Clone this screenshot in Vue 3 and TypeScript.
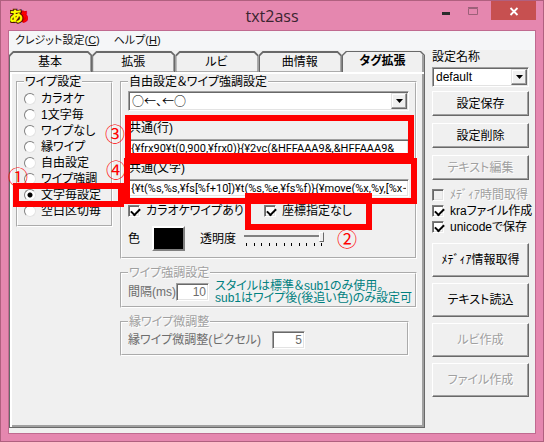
<script setup lang="ts">
import { ref } from 'vue'

interface CheckItem { id: string; label: string; checked: boolean; disabled: boolean }

const tabs: string[] = ['基本', '拡張', 'ルビ', '曲情報', 'タグ拡張']
const activeTab = ref<string>('タグ拡張')

const wipeModes: string[] = ['カラオケ', '1文字毎', 'ワイプなし', '縁ワイプ', '自由設定', 'ワイプ強調', '文字毎設定', '空白区切毎']
const wipeMode = ref<string>('文字毎設定')

const preset = ref<string>('○←、←○')
const lineTag = ref<string>('{¥frx90¥t(0,900,¥frx0)}{¥2vc(&HFFAAA9&,&HFFAAA9&')
const charTag = ref<string>('{¥t(%s,%s,¥fs[%f+10])¥t(%s,%e,¥fs%f)}{¥move(%x,%y,[%x−5(')
const karaoke = ref<boolean>(true)
const noPosition = ref<boolean>(true)
const opacity = ref<number>(100)
const interval = ref<string>('10')
const edge = ref<string>('5')
const config = ref<string>('default')

const options = ref<CheckItem[]>([
  { id: 'media', label: 'ﾒﾃﾞｨｱ時間取得', checked: false, disabled: true },
  { id: 'kra', label: 'kraファイル作成', checked: true, disabled: false },
  { id: 'uni', label: 'unicodeで保存', checked: true, disabled: false },
])
const ticks: number[] = Array.from({ length: 11 }, (_, i) => i)
</script>

<template>
  <div class="window">
    <header class="titlebar">
      <svg class="app-icon" viewBox="0 0 18 18" aria-hidden="true">
        <text class="icon-small" x="7" y="15">あ</text>
        <text class="icon-large" x="-1" y="15">あ</text>
      </svg>
      <h1>txt2ass</h1>
      <div class="win-buttons">
        <button type="button" class="win-btn" aria-label="最小化">
          <svg viewBox="0 0 10 10"><rect x="1" y="6" width="8" height="3" fill="#2b2b2b" /></svg>
        </button>
        <button type="button" class="win-btn" aria-label="最大化" disabled>
          <svg viewBox="0 0 10 10"><path d="M.5 2.5h9v6h-9zM0 1.5h10" fill="none" stroke="#9c6079" /></svg>
        </button>
        <button type="button" class="win-btn close" aria-label="閉じる">
          <svg viewBox="0 0 10 10"><path d="M1.500 2l7 7M8.500 2l-7 7" fill="none" stroke="#fff" stroke-width="1.8" /></svg>
        </button>
      </div>
    </header>

    <div class="client">
      <nav class="menu">
        <a href="#credit">クレジット設定(<u>C</u>)</a>
        <a href="#help">ヘルプ(<u>H</u>)</a>
      </nav>

      <div class="body">
        <main class="pages">
          <div class="tabs" role="tablist">
            <button
              v-for="tab in tabs"
              :key="tab"
              type="button"
              role="tab"
              class="tab"
              :class="{ active: tab === activeTab }"
              :aria-selected="tab === activeTab"
              @click="activeTab = tab"
            ><span>{{ tab }}</span></button>
          </div>

          <div class="panel" role="tabpanel">
            <fieldset class="group modes">
              <legend>ワイプ設定</legend>
              <label v-for="mode in wipeModes" :key="mode" class="radio">
                <input v-model="wipeMode" type="radio" name="wipe" :value="mode" />{{ mode }}
              </label>
            </fieldset>

            <div class="settings">
              <fieldset class="group custom">
                <legend>自由設定＆ワイプ強調設定</legend>
                <span class="combo">
                  <select v-model="preset" class="symbols" aria-label="自由設定">
                    <option>○←、←○</option>
                  </select>
                  <i><svg viewBox="0 0 7 4"><path d="M0 0h7L3.500 4z" /></svg></i>
                </span>
                <label class="caption first" for="line">共通(行)</label>
                <input id="line" v-model="lineTag" class="field code" type="text" />
                <label class="caption" for="char">共通(文字)</label>
                <input id="char" v-model="charTag" class="field code" type="text" />
                <div class="checks">
                  <label class="check"><input v-model="karaoke" type="checkbox" />カラオケワイプあり</label>
                  <label class="check"><input v-model="noPosition" type="checkbox" />座標指定なし</label>
                </div>
                <div class="color-row">
                  <span>色</span>
                  <button type="button" class="swatch" aria-label="色"></button>
                  <label for="opacity">透明度</label>
                  <div class="slider">
                    <input id="opacity" v-model="opacity" type="range" min="0" max="100" />
                    <div class="ticks"><b v-for="t in ticks" :key="t"></b></div>
                  </div>
                </div>
              </fieldset>

              <fieldset class="group emphasis" disabled>
                <legend>ワイプ強調設定</legend>
                <div class="row">
                  <label for="interval">間隔(ms)</label>
                  <input id="interval" v-model="interval" class="field num" type="text" />
                  <p>スタイルは標準＆sub1のみ使用。<br />sub1はワイプ後(後追い色)のみ設定可</p>
                </div>
              </fieldset>

              <fieldset class="group edge" disabled>
                <legend>縁ワイプ微調整</legend>
                <div class="row">
                  <label for="edge">縁ワイプ微調整(ピクセル)</label>
                  <input id="edge" v-model="edge" class="field num" type="text" />
                </div>
              </fieldset>
            </div>
          </div>
        </main>

        <aside class="side">
          <label for="config">設定名称</label>
          <span class="combo">
            <select id="config" v-model="config">
              <option>default</option>
            </select>
            <i><svg viewBox="0 0 7 4"><path d="M0 0h7L3.500 4z" /></svg></i>
          </span>
          <div class="stack">
            <button type="button" class="btn">設定保存</button>
            <button type="button" class="btn">設定削除</button>
            <button type="button" class="btn" disabled>テキスト編集</button>
          </div>
          <div class="options">
            <label v-for="item in options" :key="item.id" class="check" :class="{ off: item.disabled }">
              <input v-model="item.checked" type="checkbox" :disabled="item.disabled" />{{ item.label }}
            </label>
          </div>
          <div class="stack tall">
            <button type="button" class="btn">ﾒﾃﾞｨｱ情報取得</button>
            <button type="button" class="btn">テキスト読込</button>
            <button type="button" class="btn" disabled>ルビ作成</button>
            <button type="button" class="btn" disabled>ファイル作成</button>
          </div>
        </aside>
      </div>
    </div>

    <div class="mark box-three"></div>
    <div class="mark box-four"></div>
    <div class="mark box-one"></div>
    <div class="mark box-two"></div>
    <span class="num-mark one">①</span>
    <span class="num-mark two">②</span>
    <span class="num-mark three">③</span>
    <span class="num-mark four">④</span>
  </div>
</template>

<style>
body { margin: 0; }
</style>

<style scoped>
* { box-sizing: border-box; }
.window {
  position: relative;
  display: flex;
  flex-direction: column;
  min-height: 100vh;
  padding: 0 7px 7px;
  border: 1px solid #b0607f;
  background: #e587af;
  color: #000;
  font: 12px/14px "Liberation Sans", "Noto Sans CJK JP", sans-serif;
  font-feature-settings: "palt";
}
button, input, select { margin: 0; font: inherit; font-feature-settings: inherit; color: inherit; }

.titlebar { display: grid; grid-template-columns: 1fr auto 1fr; height: 29px; }
.app-icon { width: 18px; height: 18px; margin: 5px 0 0 2px; }
.app-icon text { font-family: "Noto Sans CJK JP", sans-serif; font-weight: 900; paint-order: stroke; stroke-width: 2px; }
.icon-large { font-size: 14px; fill: #ff0; stroke: #4a1408; }
.icon-small { font-size: 11px; fill: #f00; stroke: #e00000; }
h1 { margin: 0; font: 16px/30px "Open Sans", sans-serif; color: #3a2430; }
.win-buttons { display: flex; justify-content: flex-end; }
.win-btn { display: grid; place-items: center; width: 27px; height: 19px; padding: 0; border: 0; background: none; }
.win-btn svg { width: 10px; height: 10px; }
.win-btn.close { width: 45px; margin-left: 5px; background: #c75050; }

.client { flex: 1; display: flex; flex-direction: column; border: 1px solid #c06a90; background: #f0f0f0; }
.menu { display: flex; gap: 14px; height: 19px; padding-left: 6px; background: #f5f6f8; font-size: 11px; }
.menu a { color: #111; text-decoration: none; line-height: 19px; }
.body { flex: 1; display: grid; grid-template-columns: 1fr 97px; gap: 7px; padding: 0 6px 5px 0; }

.pages { display: flex; flex-direction: column; padding-top: 1px; min-width: 0; }
.tabs { display: grid; grid-template-columns: repeat(5, 1fr); height: 21px; }
.tab {
  padding: 1px 1px 0;
  border: 0;
  background: #696969;
  clip-path: polygon(0 4px, 4px 0, calc(100% - 4px) 0, 100% 4px, 100% 100%, 0 100%);
}
.tab span {
  display: block;
  height: 19px;
  line-height: 19px;
  background: #f0f0f0;
  border-right: 1px solid #a0a0a0;
  clip-path: polygon(0 4px, 4px 0, calc(100% - 4px) 0, 100% 4px, 100% 100%, 0 100%);
}
.tab.active { font-weight: bold; }
.tab.active span { height: 20px; border-right-width: 2px; }
.panel {
  flex: 1;
  display: flex;
  align-items: flex-start;
  gap: 7px;
  padding: 3px 7px 0 6px;
  border: solid;
  border-width: 0 1px 1px;
  border-color: #696969;
  box-shadow: inset 2px 2px #fff, inset -2px -2px #a0a0a0;
}

.group { min-width: 0; margin: 0; padding: 0 6px; border: 2px groove #fff; }
.group legend { padding: 0 1px; height: 14px; }
.group:disabled { color: #6d6d6d; }
.group:disabled legend { color: #a0a0a0; text-shadow: 1px 1px #fff; }
.modes { width: 97px; padding-bottom: 6px; }
.radio { display: flex; align-items: center; gap: 5px; height: 16px; white-space: nowrap; }
.modes .radio:nth-of-type(1) { margin-top: 2px; }
.radio input {
  appearance: none;
  flex: none;
  width: 12px;
  height: 12px;
  border: 1px solid;
  border-color: #808080 #e3e3e3 #e3e3e3 #808080;
  border-radius: 50%;
  background: #fff;
}
.radio input:checked { background: radial-gradient(circle, #000 2px, #fff 3px); }

.settings { flex: 1; display: flex; flex-direction: column; gap: 7px; min-width: 0; }
.custom { padding-bottom: 6px; }
.combo { position: relative; display: block; margin-top: 2px; }
.combo select {
  appearance: none;
  display: block;
  width: 100%;
  height: 20px;
  padding: 0 22px 0 3px;
  border: 1px solid;
  border-color: #a0a0a0 #fff #fff #a0a0a0;
  border-radius: 0;
  background: #fff;
  box-shadow: inset 1px 1px #696969, inset -1px -1px #e3e3e3;
}
.combo .symbols { font-family: "Noto Sans CJK JP", sans-serif; }
.combo i {
  position: absolute;
  top: 2px;
  right: 2px;
  bottom: 2px;
  display: grid;
  place-items: center;
  width: 16px;
  background: #f0f0f0;
  border: 1px solid;
  border-color: #e3e3e3 #696969 #696969 #e3e3e3;
  box-shadow: inset -1px -1px #a0a0a0, inset 1px 1px #fff;
  pointer-events: none;
}
.combo svg { width: 7px; height: 4px; }
.caption { display: block; margin-top: 4px; padding-left: 1px; }
.caption.first { margin-top: 10px; }
.field {
  display: block;
  width: 100%;
  height: 18px;
  margin-top: 4px;
  padding: 0 2px;
  border: 1px solid;
  border-color: #a0a0a0 #fff #fff #a0a0a0;
  background: #fff;
  box-shadow: inset 1px 1px #696969, inset -1px -1px #e3e3e3;
}
.field.code { font-family: Roboto, "Liberation Sans", sans-serif; font-size: 11px; }
.checks { display: grid; grid-template-columns: 136px 1fr; margin-top: 6px; }
.check { display: flex; align-items: center; gap: 6px; height: 16px; white-space: nowrap; }
.check input {
  appearance: none;
  position: relative;
  flex: none;
  width: 12px;
  height: 12px;
  border: 1px solid;
  border-color: #808080 #fff #fff #808080;
  background: #fff;
  box-shadow: inset 1px 1px #696969, inset -1px -1px #e3e3e3;
}
.check input:checked::after {
  content: "";
  position: absolute;
  left: 2px;
  top: 2px;
  width: 7px;
  height: 4px;
  border: solid #000;
  border-width: 0 0 2px 2px;
  transform: rotate(-45deg);
}
.check input:disabled { background: #f0f0f0; }
.check.off { color: #a0a0a0; text-shadow: 1px 1px #fff; }
.color-row { display: flex; align-items: center; height: 25px; margin-top: 7px; }
.color-row > span { width: 24px; }
.swatch {
  width: 33px;
  height: 25px;
  margin-right: 15px;
  padding: 0;
  border: 2px solid;
  border-color: #fff #808080 #808080 #fff;
  background: #000;
}
.slider { width: 80px; margin-left: 8px; }
.slider input {
  appearance: none;
  display: block;
  width: 100%;
  height: 11px;
  background: linear-gradient(#808080, #808080) 0 3px / 100% 2px no-repeat;
}
.slider input::-webkit-slider-thumb {
  appearance: none;
  width: 5px;
  height: 10px;
  border: 1px solid;
  border-color: #fff #696969 #696969 #fff;
  background: #f0f0f0;
}
.ticks { display: flex; justify-content: space-between; padding: 0 2px; }
.ticks b { width: 1px; height: 3px; background: #000; }

.row { display: flex; align-items: center; }
.row .field { margin: 0; }
.num { flex: none; width: 33px; text-align: right; }
.emphasis { padding-bottom: 2px; }
.emphasis .row { gap: 1px; height: 24px; }
.emphasis label { width: 47px; white-space: nowrap; }
.emphasis p { margin: 0 0 0 5px; color: #008080; line-height: 12px; white-space: nowrap; }
.edge { margin-right: 8px; padding-bottom: 4px; }
.edge .row { height: 21px; }
.edge label { width: 144px; white-space: nowrap; }

.side { display: flex; flex-direction: column; }
.side .combo { margin-top: 3px; }
.stack { display: grid; gap: 7px; margin-top: 4px; }
.btn {
  height: 25px;
  padding: 0;
  border: 1px solid;
  border-color: #fff #696969 #696969 #fff;
  background: #f0f0f0;
  box-shadow: inset -1px -1px #a0a0a0;
  white-space: nowrap;
}
.btn:disabled { color: #a0a0a0; text-shadow: 1px 1px #fff; }
.options { margin-top: 7px; }
.stack.tall { gap: 6px; margin-top: 8px; }
.tall .btn { height: 34px; }

.mark { position: absolute; border: 6px solid #f00; pointer-events: none; }
.box-one { left: 12px; top: 182px; width: 111px; height: 24px; }
.box-two { left: 244px; top: 192px; width: 127px; height: 37px; }
.box-three { left: 124px; top: 114px; width: 289px; height: 44px; }
.box-four { left: 123px; top: 157px; width: 293px; height: 46px; }
.num-mark { position: absolute; color: #f00; font: 20px/20px "Noto Sans CJK JP", sans-serif; pointer-events: none; }
.one { left: 7px; top: 166px; }
.two { left: 336px; top: 228px; }
.three { left: 104px; top: 123px; }
.four { left: 105px; top: 159px; }
</style>
